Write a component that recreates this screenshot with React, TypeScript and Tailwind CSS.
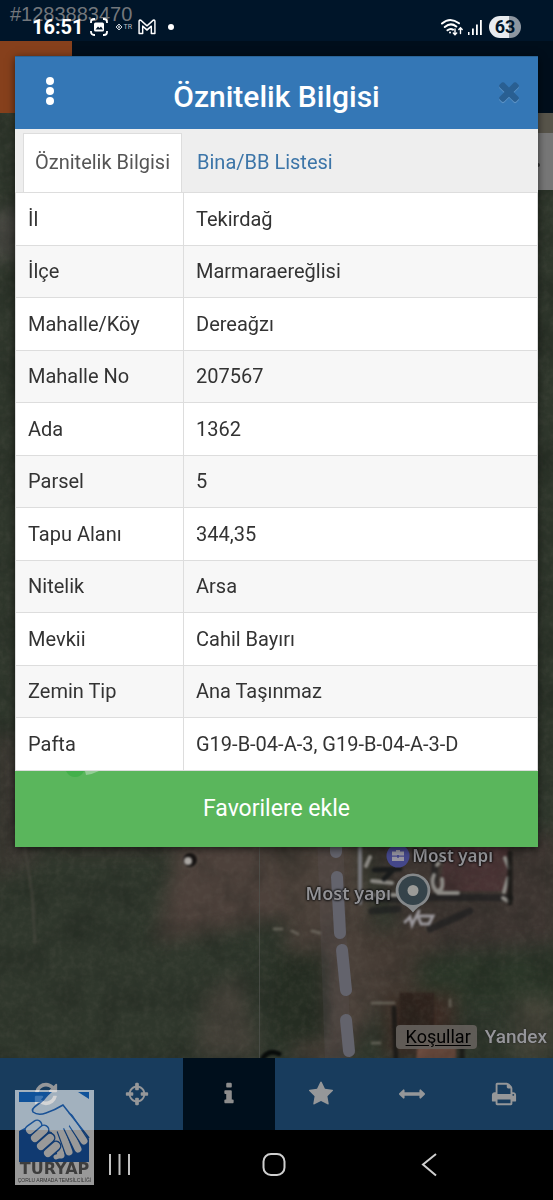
import type { ReactNode } from "react";

const rows: [string, string][] = [
  ["İl", "Tekirdağ"],
  ["İlçe", "Marmaraereğlisi"],
  ["Mahalle/Köy", "Dereağzı"],
  ["Mahalle No", "207567"],
  ["Ada", "1362"],
  ["Parsel", "5"],
  ["Tapu Alanı", "344,35"],
  ["Nitelik", "Arsa"],
  ["Mevkii", "Cahil Bayırı"],
  ["Zemin Tip", "Ana Taşınmaz"],
  ["Pafta", "G19-B-04-A-3, G19-B-04-A-3-D"],
];

const tools = [
  {
    label: "Yenile",
    active: false,
    d: "M1639 1056q0 5-1 7-64 268-268 434.5t-478 166.5q-146 0-282.5-55t-243.5-157l-129 129q-19 19-45 19t-45-19-19-45v-448q0-26 19-45t45-19h448q26 0 45 19t19 45-19 45l-137 137q71 66 161 102t187 36q134 0 250-65t186-179q11-17 53-117 8-23 30-23h192q13 0 22.5 9.5t9.5 22.5zm25-800v448q0 26-19 45t-45 19h-448q-26 0-45-19t-19-45 19-45l138-138q-148-137-349-137-134 0-250 65t-186 179q-11 17-53 117-8 23-30 23h-199q-13 0-22.5-9.5t-9.5-22.5v-7q65-268 270-434.5t480-166.5q146 0 284 55.5t245 156.5l130-129q19-19 45-19t45 19 19 45z",
  },
  {
    label: "Konum",
    active: false,
    d: "M1325 1024h-109q-26 0-45-19t-19-45v-128q0-26 19-45t45-19h109q-32-108-112.5-188.5t-188.5-112.5v109q0 26-19 45t-45 19h-128q-26 0-45-19t-19-45v-109q-108 32-188.5 112.5t-112.5 188.5h109q26 0 45 19t19 45v128q0 26-19 45t-45 19h-109q32 108 112.5 188.5t188.5 112.5v-109q0-26 19-45t45-19h128q26 0 45 19t19 45v109q108-32 188.5-112.5t112.5-188.5zm339-192v128q0 26-19 45t-45 19h-143q-37 161-154.5 278.5t-278.5 154.5v143q0 26-19 45t-45 19h-128q-26 0-45-19t-19-45v-143q-161-37-278.5-154.5t-154.5-278.5h-143q-26 0-45-19t-19-45v-128q0-26 19-45t45-19h143q37-161 154.5-278.5t278.5-154.5v-143q0-26 19-45t45-19h128q26 0 45 19t19 45v143q161 37 278.5 154.5t154.5 278.5h143q26 0 45 19t19 45z",
  },
  {
    label: "Bilgi",
    active: true,
    d: "M1216 1344v128q0 26-19 45t-45 19h-512q-26 0-45-19t-19-45v-128q0-26 19-45t45-19h64v-384h-64q-26 0-45-19t-19-45v-128q0-26 19-45t45-19h384q26 0 45 19t19 45v576h64q26 0 45 19t19 45zm-128-1152v192q0 26-19 45t-45 19h-256q-26 0-45-19t-19-45v-192q0-26 19-45t45-19h256q26 0 45 19t19 45z",
  },
  {
    label: "Favoriler",
    active: false,
    d: "M1728 647q0 22-26 48l-363 354 86 500q1 7 1 20 0 21-10.5 35.5t-30.5 14.5q-19 0-40-12l-449-236-449 236q-22 12-40 12-21 0-31.5-14.5t-10.5-35.5q0-6 2-20l86-500-364-354q-25-27-25-48 0-37 56-46l502-73 225-455q19-41 49-41t49 41l225 455 502 73q56 9 56 46z",
  },
  {
    label: "Ölçüm",
    active: false,
    d: "M1792 896q0 26-19 45l-256 256q-19 19-45 19t-45-19-19-45v-128h-1024v128q0 26-19 45t-45 19-45-19l-256-256q-19-19-19-45t19-45l256-256q19-19 45-19t45 19 19 45v128h1024v-128q0-26 19-45t45-19 45 19l256 256q19 19 19 45z",
  },
  {
    label: "Yazdır",
    active: false,
    d: "M448 1536h896v-256h-896v256zm0-640h896v-384h-160q-40 0-68-28t-28-68v-160h-640v640zm1152 64q0-26-19-45t-45-19-45 19-19 45 19 45 45 19 45-19 19-45zm128 0v416q0 13-9.5 22.5t-22.5 9.5h-224v160q0 40-28 68t-68 28h-960q-40 0-68-28t-28-68v-160h-224q-13 0-22.5-9.5t-9.5-22.5v-416q0-79 56.5-135.5t135.5-56.5h64v-544q0-40 28-68t68-28h672q40 0 88 20t76 48l152 152q28 28 48 76t20 88v256h64q79 0 135.5 56.5t56.5 135.5z",
  },
];

const timesPath =
  "M1490 1322q0 40-28 68l-136 136q-28 28-68 28t-68-28l-294-294-294 294q-28 28-68 28t-68-28l-136-136q-28-28-28-68t28-68l294-294-294-294q-28-28-28-68t28-68l136-136q28-28 68-28t68 28l294 294 294-294q28-28 68-28t68 28l136 136q28 28 28 68t-28 68l-294 294 294 294q28 28 28 68z";

function StatusBar() {
  return (
    <div className="relative flex h-[41px] items-center bg-[#001529] pt-3 pr-8 pl-8 text-white">
      <span className="absolute top-[2px] left-[10px] font-['Liberation_Sans',sans-serif] text-[20px] leading-6 text-[#73777c]">
        #1283883470
      </span>
      <span className="relative text-[20px] leading-6 font-bold">16:51</span>
      <svg className="relative ml-[6px] size-[18px]" viewBox="0 0 18 18" fill="none" stroke="#fff" strokeWidth="1.8">
        <path d="M1 5V4a3 3 0 0 1 3-3h1M13 1h1a3 3 0 0 1 3 3v1M17 13v1a3 3 0 0 1-3 3h-1M5 17H4a3 3 0 0 1-3-3v-1" />
        <rect x="4" y="4.5" width="10" height="9" rx="1.5" fill="#fff" stroke="none" />
        <path d="M5.5 11.5l2.5-3 1.5 1.5L11 8.500l2 3z" fill="#001529" stroke="none" />
      </svg>
      <svg className="relative ml-[7px] size-2" viewBox="0 0 8 8" fill="none" stroke="#cfd4da">
        <path d="M1 4l3-3 3 3-3 3zM4 2.500v3M2.800 4h2.400" />
      </svg>
      <span className="relative ml-[1px] text-[7px] leading-3 text-[#b9bfc6]">TR</span>
      <svg className="relative ml-[6px] h-4 w-[18px]" viewBox="0 0 20 16" preserveAspectRatio="none" fill="none" stroke="#fff" strokeWidth="1.600" strokeLinejoin="round">
        <path d="M1.200 14.500V2.200Q1.500.8 3 1.200L10 6.800 17 1.200q1.500-.4 1.800 1V14.500h-4V7.200L10 11 5.200 7.200v7.300z" />
      </svg>
      <span className="relative ml-3 size-[6px] rounded-full bg-white" />
      <span className="flex-1" />
      <svg className="h-[18px] w-6" viewBox="0 0 24 18" fill="none" stroke="#fff" strokeWidth="2" strokeLinecap="round">
        <path d="M2 5.500q8-7 17-.2M4.800 9q6-5 11.500-.5M7.500 12.300q3-2.300 5.500-.6" />
        <circle cx="10" cy="14.500" r="1" fill="#fff" stroke="none" />
        <path d="M15 11v5.500M13.300 15l1.700 1.700 1.700-1.700M20.500 15.500V10M18.800 11.500l1.700-1.700 1.700 1.700" strokeWidth="1.400" />
      </svg>
      <svg className="ml-1 h-4 w-[14px]" viewBox="0 0 14 16" fill="#fff">
        <path d="M0 13h1.500v3H0zM4 9.500h1.800V16H4zM8 5.500h1.800V16H8zM12 1h1.800v15H12z" />
      </svg>
      <span className="ml-[7px] flex h-[22px] w-8 items-center justify-center rounded-full bg-linear-to-r from-[#e8ebef] from-62% to-[#8d96a0] to-62% text-[18px] leading-5 font-bold text-[#001529]">
        63
      </span>
    </div>
  );
}

/* Satellite backdrop: fields, road, buildings and a dashed lane. */
function Satellite() {
  return (
    <svg className="absolute inset-0 size-full" viewBox="0 0 553 945" preserveAspectRatio="xMidYMax slice" aria-hidden="true">
      <defs>
        <filter id="soft" x="-20%" y="-20%" width="140%" height="140%" colorInterpolationFilters="sRGB">
          <feGaussianBlur stdDeviation="9" />
        </filter>
        <filter id="small" colorInterpolationFilters="sRGB">
          <feGaussianBlur stdDeviation="1" />
        </filter>
        <filter id="grain" colorInterpolationFilters="sRGB">
          <feTurbulence type="fractalNoise" baseFrequency="0.16" numOctaves="3" seed="7" />
          <feColorMatrix values="0 0 0 0 .42  0 0 0 0 .4  0 0 0 0 .36  0 1.600 0 0 -.6" />
        </filter>
        <filter id="shade" colorInterpolationFilters="sRGB">
          <feTurbulence type="fractalNoise" baseFrequency="0.03" numOctaves="4" seed="3" />
          <feColorMatrix values="0 0 0 0 .08  0 0 0 0 .1  0 0 0 0 .08  0 2 0 0 -.8" />
        </filter>
      </defs>
      <rect width="553" height="945" fill="#2f372c" />
      <g filter="url(#soft)">
        <path d="M-10 100l50-10v50l-50 8z" fill="#4b4a45" />
        <path d="M-10 620l30 0 20 130-50 20z" fill="#3a3731" />
        <path d="M180 720h150l-5 70-60 20-110 20z" fill="#4d413b" />
        <path d="M60 715h120l-5 25H50z" fill="#3a3730" />
        <path d="M265 720h90l20 90 20 60-50 80h-50l-10-130z" fill="#4a4039" />
        <path d="M360 720h200v110l-150 10z" fill="#3d3531" />
        <path d="M360 820l70-10 10 60-60 10z" fill="#443a33" />
        <path d="M415 845h145v45H425z" fill="#2b3628" />
        <path d="M205 880l35-20 20 85h-65z" fill="#434038" />
        <path d="M515 885h38v60h-38z" fill="#46453a" />
        <path d="M385 880h70v65h-70z" fill="#3c2c25" />
        <path d="M270 840h55v90h-55z" fill="#262e23" />
      </g>
      <path d="M447 730h62v48h-70z" fill="#493334" filter="url(#small)" />
      <path d="M418 928h38v20h-40z" fill="#6b4a3d" filter="url(#small)" />
      <path d="M400 880h34v40h-36z" fill="#2f231d" filter="url(#small)" />
      <rect width="553" height="945" filter="url(#grain)" opacity=".2" />
      <rect width="553" height="945" filter="url(#shade)" opacity=".3" />
      <g filter="url(#small)" strokeLinecap="round">
        <path d="M24 730l8 50 3 50" stroke="#4b4a42" strokeWidth="3" fill="none" opacity=".5" />
        <path d="M360 735v55" stroke="#77777b" strokeWidth="4" />
        <path d="M436 745l-3 25M365 785l48 2 22-3 75 1M372 798l26-2M470 798l-40 18" stroke="#191b1d" strokeWidth="7" fill="none" opacity=".6" />
        <path d="M370 744l-4 9M372 768l20 2M369 782h38M438 780h20M441 746l-4 6M434 762q-4 8 2 16 8 1 6-12M505 745l4 10M508 765l-4 14M503 785l5 3" fill="none" stroke="#8b8984" strokeWidth="4" />
        <path d="M405 809l5-5 2 8 7-14M418 803h15l-4 8h-8z" fill="none" stroke="#99969a" strokeWidth="3" />
        <path d="M374 757l26-1M392 758l-8 8" stroke="#191b1b" strokeWidth="5" />
        <path d="M274 816h8M292 818l6 3M312 818l8 2M450 887v6M372 890h22M372 930h8" stroke="#827e74" strokeWidth="3" opacity=".55" />
        <path d="M462 915v30M394 895l2 50M510 740v50" stroke="#171715" strokeWidth="5" opacity=".8" />
        <circle cx="190" cy="747" r="8" fill="#171413" stroke="#514740" strokeWidth="2" />
        <circle cx="188" cy="748" r="4" fill="#aaa6a2" />
        <path d="M263 945q6-9 16-4" stroke="#080b0a" strokeWidth="5" fill="none" />
      </g>
      <path d="M330 720l8 228" stroke="#68666f" strokeWidth="26" opacity=".14" />
      <path d="M336 735v4M337 764l3 56M342 837l4 40M346 907l3 31" stroke="#63636c" strokeWidth="12" strokeLinecap="round" />
      <path d="M259.500 734v211" stroke="#51534f" opacity=".7" />
      <path d="M538 0h15v20h-15z" fill="#57544a" />
      <path d="M530 20h23v57h-23z" fill="#777" />
      <circle cx="538" cy="52" r="2" fill="#333" />
    </svg>
  );
}

function MapLabel({ children }: { children: ReactNode }) {
  return (
    <span className="font-['Noto_Sans',sans-serif] leading-6 font-semibold whitespace-nowrap text-[#929296] [text-shadow:0_0_2px_#111,0_0_2px_#111,0_0_3px_#111]">
      {children}
    </span>
  );
}

function MapView() {
  return (
    <div className="relative flex-1 overflow-hidden">
      <Satellite />
      <div className="absolute right-[60px] bottom-[190px] flex items-center gap-[2px] text-[17px]">
        <svg className="size-6" viewBox="0 0 24 24">
          <circle cx="12" cy="12" r="11.500" fill="#44478a" />
          <path d="M10 7.500V6h4v1.500h4v4h-5V11h-2v.5H6v-4zM6 12.700h5v1h2v-1h5V17H6z" fill="#9694a0" />
        </svg>
        <MapLabel>Most yapı</MapLabel>
      </div>
      <div className="absolute right-[122px] bottom-[144px] flex items-center gap-1 text-[18px]">
        <MapLabel>Most yapı</MapLabel>
        <svg className="h-[42px] w-9" viewBox="0 0 36 42">
          <path d="M18 1.500a17 17 0 0 1 10 31q-5 2-10 8-5-6-10-8a17 17 0 0 1 10-31z" fill="#85888a" />
          <circle cx="18" cy="18.500" r="14.500" fill="#35434a" />
          <circle cx="18" cy="18.500" r="5.500" fill="#9b9b98" />
        </svg>
      </div>
      <div className="absolute right-[6px] bottom-[9px] flex items-center gap-2">
        <a href="#kosullar" className="rounded-[4px] bg-[#65615c]/90 pr-[6px] pl-[10px] text-[18px] leading-6 text-black underline underline-offset-2">
          Koşullar
        </a>
        <span className="text-[19px] leading-6 font-medium text-[#96969a] [text-shadow:0_0_2px_#222]">Yandex</span>
      </div>
    </div>
  );
}

function Toolbar() {
  return (
    <nav className="grid h-[72px] grid-cols-6 bg-[#183c5d] pr-[3px]">
      {tools.map((t) => (
        <button
          key={t.label}
          type="button"
          aria-label={t.label}
          className={t.active ? "flex items-center justify-center bg-[#000f1c]" : "flex items-center justify-center"}
        >
          <svg className="size-[26px]" viewBox="0 0 1792 1792" fill={t.active ? "#8d8d8d" : "#959799"}>
            <path d={t.d} />
          </svg>
        </button>
      ))}
    </nav>
  );
}

function SystemNav() {
  return (
    <nav className="grid h-[70px] grid-cols-3 bg-black pr-[47px] pl-[41px]">
      <button type="button" aria-label="Son uygulamalar" className="flex items-center justify-center">
        <svg className="size-6" viewBox="0 0 24 24" stroke="#c2c2c2" strokeWidth="2">
          <path d="M3 1v21M12.500 1v21M22 1v21" />
        </svg>
      </button>
      <button type="button" aria-label="Ana ekran" className="flex items-center justify-center">
        <svg className="size-6" viewBox="0 0 24 24" fill="none" stroke="#cfcfcf" strokeWidth="2">
          <rect x="1.500" y="1" width="21" height="21" rx="7.500" />
        </svg>
      </button>
      <button type="button" aria-label="Geri" className="flex items-center justify-center">
        <svg className="size-6" viewBox="0 0 24 24" fill="none" stroke="#cfcfcf" strokeWidth="2">
          <path d="M19 1L6 11.500 19 22.500" />
        </svg>
      </button>
    </nav>
  );
}

const leftFingers = ["M15 40l7-5", "M20 48l9-8", "M26 56l9-8", "M33 63l8-7"];
const rightFingers = ["M40 40l6 25", "M46 40l8 22", "M52 36l11 23", "M54 28l15 23"];

function AgencyLogo() {
  return (
    <svg className="absolute bottom-[15px] left-[15px] h-[95px] w-[79px] opacity-60" viewBox="0 0 79 95" role="img" aria-label="TURYAP">
      <rect width="79" height="95" fill="#fff" />
      <path d="M4 2h33l-11 10H4zM63 2h11v7z" fill="#0b62c4" />
      <path d="M4 41l11-6 9 3 20 4 28 4 2 3v23H4z" fill="#1c62bd" />
      <g strokeLinecap="round">
        {rightFingers.map((d) => (
          <g key={d}>
            <path d={d} stroke="#1c62bd" strokeWidth="9.500" />
            <path d={d} stroke="#fff" strokeWidth="7" />
          </g>
        ))}
      </g>
      <path d="M28 25l9-3 11-6 9 12-3 8-7 3-8 4-16-6z" fill="#fff" />
      <g strokeLinecap="round">
        {leftFingers.map((d) => (
          <g key={d}>
            <path d={d} stroke="#1c62bd" strokeWidth="11" />
            <path d={d} stroke="#fff" strokeWidth="8" />
          </g>
        ))}
        <path d="M41 67l3-1" stroke="#fff" strokeWidth="5" />
      </g>
      <path d="M34 2q-4 8-12 13-6 4-4 7 5 4 13 1 9-3 17-8l26 33" fill="none" stroke="#1c62bd" strokeWidth="1.600" />
      <text x="39.500" y="84" textAnchor="middle" className="font-['DejaVu_Sans',sans-serif] text-[16px] font-bold" fill="#666">
        TURYAP
      </text>
      <text x="39.500" y="92" textAnchor="middle" className="font-['Liberation_Sans',sans-serif] text-[5px]" fill="#555">
        ÇORLU ARMADA TEMSİLCİLİĞİ
      </text>
    </svg>
  );
}

function ParcelDialog() {
  return (
    <section
      role="dialog"
      aria-labelledby="dialog-title"
      className="absolute inset-x-[15px] top-14 flex flex-col bg-white shadow-[0_2px_8px_rgba(0,0,0,0.6)]"
    >
      <header className="grid h-[73px] grid-cols-[70px_1fr_70px] items-center border-t border-[#2a6496] bg-[#3477b6]">
        <button type="button" aria-label="Menü" className="flex justify-center pb-1">
          <svg className="h-7 w-2" viewBox="0 0 8 28" fill="#fff">
            <circle cx="4" cy="4" r="4" />
            <circle cx="4" cy="14" r="4" />
            <circle cx="4" cy="24" r="4" />
          </svg>
        </button>
        <h1 id="dialog-title" className="pt-2 text-center text-[30px] leading-9 font-medium text-white">
          Öznitelik Bilgisi
        </h1>
        <button type="button" aria-label="Kapat" className="flex justify-end pr-[14px] pb-1">
          <svg className="size-[30px]" viewBox="0 0 1792 1792">
            <path d={timesPath} transform="translate(0 70)" fill="#5b92c6" />
            <path d={timesPath} fill="#295f92" />
          </svg>
        </button>
      </header>
      <div role="tablist" className="flex h-16 border-b border-[#ddd] bg-[#eee] pt-1 pl-2">
        <button
          type="button"
          role="tab"
          aria-selected="true"
          className="border border-b-0 border-[#ddd] bg-white px-[11px] pb-[2px] text-[20px] leading-7 whitespace-nowrap text-[#555]"
        >
          Öznitelik Bilgisi
        </button>
        <button type="button" role="tab" aria-selected="false" className="px-[15px] pb-[2px] text-[20px] leading-7 whitespace-nowrap text-[#3c75a8]">
          Bina/BB Listesi
        </button>
      </div>
      <table className="w-full border-separate border-spacing-0 border-x border-[#ddd] text-left text-[20px] leading-7 text-[#333]">
        <tbody>
          {rows.map(([name, value]) => (
            <tr key={name} className="odd:h-[53px] even:h-[52px] even:bg-[#f7f7f7]">
              <th scope="row" className="w-[168px] border-r border-b border-[#ddd] px-3 pb-px font-normal">
                {name}
              </th>
              <td className="border-b border-[#ddd] px-3 pb-px">{value}</td>
            </tr>
          ))}
        </tbody>
      </table>
      <button type="button" className="relative h-[76px] bg-[#5ab65c] text-[23px] leading-8 text-white">
        <svg className="absolute top-0 left-[50px] h-2 w-9" viewBox="0 0 36 8" aria-hidden="true">
          <path d="M1 0h18q-3 6-9 6T1 0z" fill="#43b04b" />
          <path d="M20 0h14q-6 3-13 4z" fill="#93cd95" />
        </svg>
        Favorilere ekle
      </button>
    </section>
  );
}

export default function App() {
  return (
    <div className="relative flex min-h-screen flex-col overflow-hidden bg-black font-[Roboto,sans-serif]">
      <StatusBar />
      <div className="flex h-[72px] bg-[#000e1b]">
        <div className="w-[72px] bg-[#86401c]" />
      </div>
      <MapView />
      <Toolbar />
      <SystemNav />
      <ParcelDialog />
      <AgencyLogo />
    </div>
  );
}
